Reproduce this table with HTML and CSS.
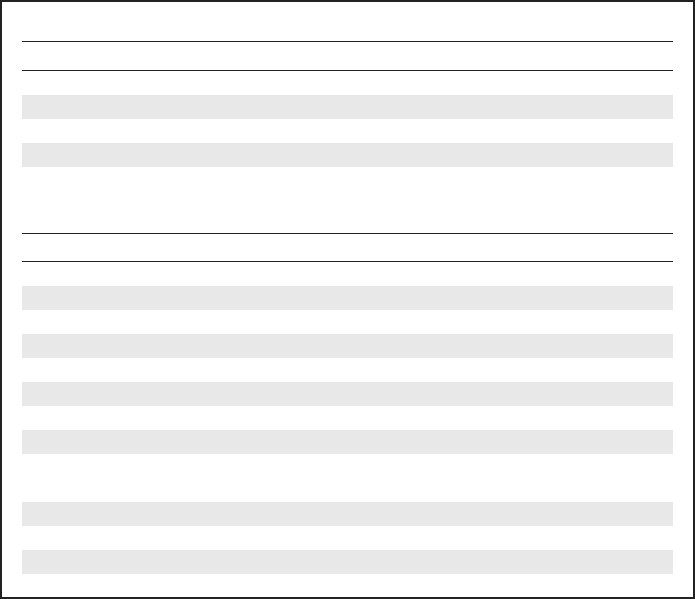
FILE: index.html
```html
<!DOCTYPE html>
<html>
<head>
<meta charset="utf-8">
<link rel="stylesheet" href="styles.css">
</head>
<body>
<div class="page">
  <div class="table t1">
    <div class="head"></div>
    <div class="group">
      <div class="row"></div><div class="row"></div><div class="row"></div><div class="row"></div>
    </div>
  </div>
  <div class="table t2">
    <div class="head"></div>
    <div class="group">
      <div class="row"></div><div class="row"></div><div class="row"></div><div class="row"></div>
      <div class="row"></div><div class="row"></div><div class="row"></div><div class="row"></div>
      <div class="row"></div>
    </div>
    <div class="group">
      <div class="row"></div><div class="row"></div><div class="row"></div><div class="row"></div>
    </div>
  </div>
</div>
</body>
</html>
```

FILE: styles.css
```css
html, body {
  margin: 0;
  padding: 0;
  background: #ffffff;
  font-family: "Liberation Sans", Arial, sans-serif;
}
.page {
  box-sizing: border-box;
  width: 695px;
  height: 599px;
  border: 2px solid #222222;
  padding: 39px 20px 20px 20px;
  display: flex;
  flex-direction: column;
}
.table {
  display: flex;
  flex-direction: column;
}
.t2 {
  margin-top: 66px;
}
.head {
  height: 28px;
  border-top: 1px solid #222222;
  border-bottom: 1px solid #222222;
}
.t2 .head {
  height: 27px;
}
.group {
  display: flex;
  flex-direction: column;
}
.row {
  height: 24px;
}
.row:nth-child(even) {
  background: #e8e8e8;
}
```
